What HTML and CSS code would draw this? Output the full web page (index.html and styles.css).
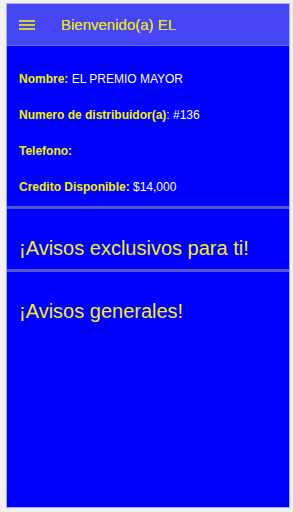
FILE: index.html
```html
<!DOCTYPE html>
<html lang="es">
<head>
    <meta charset="UTF-8">
    <meta name="viewport" content="width=device-width, initial-scale=1.0">
    <title>Bienvenido(a)</title>
    <link rel="stylesheet" href="styles.css">
</head>
<body>

    <div class="app">
        <header class="toolbar">
            <span class="menu-btn">
                <svg width="16" height="12" viewBox="0 0 16 12">
                    <rect x="0" y="1" width="16" height="2"/>
                    <rect x="0" y="5" width="16" height="2"/>
                    <rect x="0" y="9" width="16" height="2"/>
                </svg>
            </span>
            <span class="title">Bienvenido(a) EL</span>
        </header>

        <section class="info">
            <p><b>Nombre:</b> EL PREMIO MAYOR</p>
            <p><b>Numero de distribuidor(a)</b>: #136</p>
            <p><b>Telefono:</b></p>
            <p><b>Credito Disponible:</b> $14,000</p>
        </section>

        <section class="avisos">
            <h2>¡Avisos exclusivos para ti!</h2>
        </section>

        <section class="avisos last">
            <h2>¡Avisos generales!</h2>
        </section>
    </div>

</body>
</html>
```

FILE: styles.css
```css
html, body {
    height: 100%;
}
body {
    margin: 0;
    padding: 3px 3px 4px 6px;
    box-sizing: border-box;
    background: #f1f1f3;
    font-family: "Liberation Sans", Arial, sans-serif;
}
.app {
    height: 100%;
    display: flex;
    flex-direction: column;
    background: #0000ff;
    border: 1px solid #a8a8ff;
    box-sizing: border-box;
}
.toolbar {
    height: 42px;
    flex-shrink: 0;
    display: flex;
    align-items: center;
    background: #4646f4;
    border-bottom: 1px solid #6464f0;
    box-sizing: border-box;
    color: #e6de2a;
}
.menu-btn {
    display: flex;
    margin-left: 12px;
    width: 42px;
}
.menu-btn svg {
    fill: #d8d030;
}
.title {
    font-size: 15px;
    text-shadow: 0 0 0.4px #e6de2a;
}
.info {
    padding: 15px 12px 1px;
    border-bottom: 3px solid #5656c4;
}
.info p {
    margin: 0;
    height: 36px;
    line-height: 36px;
    font-size: 12px;
    color: #ffffcc;
}
.info b {
    color: #f2f000;
}
.avisos {
    padding: 27px 12px 9px;
    border-bottom: 3px solid #5656c4;
}
.avisos.last {
    border-bottom: none;
}
.avisos h2 {
    margin: 0;
    font-size: 20px;
    line-height: 24px;
    font-weight: normal;
    color: #f2ec2a;
}
```
